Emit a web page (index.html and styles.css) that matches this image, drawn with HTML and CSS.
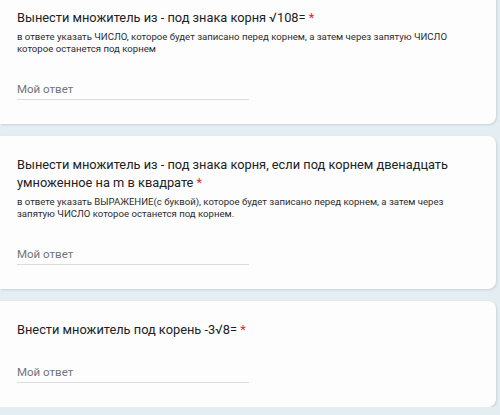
FILE: index.html
```html
<!DOCTYPE html>
<html lang="ru">
<head>
<meta charset="utf-8">
<title>Форма</title>
<link rel="stylesheet" href="styles.css">
</head>
<body>
<main class="list">
  <section class="card">
    <div class="title">Вынести множитель из - под знака корня √108= <span class="req">*</span></div>
    <div class="desc">в ответе указать ЧИСЛО, которое будет записано перед корнем, а затем через запятую ЧИСЛО которое останется под корнем</div>
    <div class="answer">Мой ответ</div>
  </section>
  <section class="card">
    <div class="title">Вынести множитель из - под знака корня, если под корнем двенадцать умноженное на m в квадрате <span class="req">*</span></div>
    <div class="desc">в ответе указать ВЫРАЖЕНИЕ(с буквой), которое будет записано перед корнем, а затем через запятую ЧИСЛО которое останется под корнем.</div>
    <div class="answer">Мой ответ</div>
  </section>
  <section class="card">
    <div class="title">Внести множитель под корень -3√8= <span class="req">*</span></div>
    <div class="answer answer-nodesc">Мой ответ</div>
  </section>
</main>
</body>
</html>
```
FILE: styles.css
```css
html, body {
  margin: 0;
  padding: 0;
  background: #e4edf1;
  font-family: Roboto, "Noto Sans", sans-serif;
  color: #202124;
}
.list {
  display: flex;
  flex-direction: column;
  gap: 12px;
  margin-top: -11px;
  width: 496px;
}
.card {
  background: #fdfdfd;
  border-radius: 0 8px 8px 0;
  box-shadow: 1px 1px 2px rgba(60, 64, 67, 0.15);
  padding: 20px 34px 24px 17px;
}
.title {
  font-size: 12.8px;
  line-height: 18px;
}
.req {
  color: #d93025;
}
.desc {
  margin-top: 4px;
  font-size: 9.6px;
  line-height: 12px;
  color: #2b2c2f;
}
.answer {
  margin-top: 26px;
  width: 232px;
  height: 18px;
  font-size: 11.5px;
  line-height: 16px;
  color: #70757a;
  border-bottom: 1px solid #dadce0;
}
.answer-nodesc {
  margin-top: 25px;
}
```
